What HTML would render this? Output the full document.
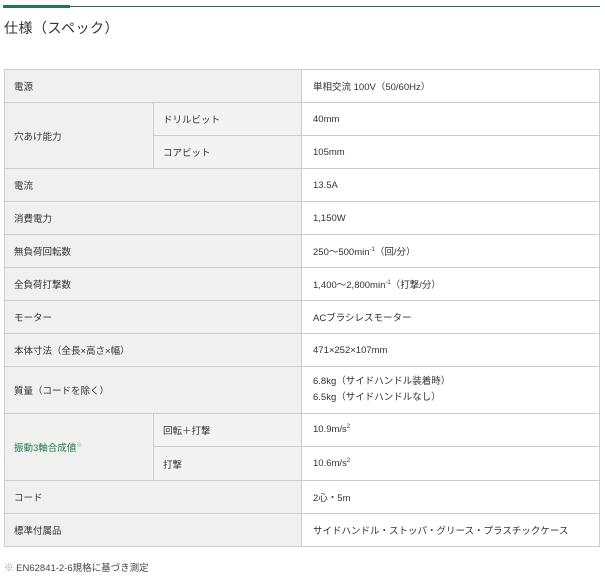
<!DOCTYPE html>
<html><head><meta charset="utf-8"><style>
*{margin:0;padding:0;box-sizing:border-box}
body{width:605px;height:576px;background:#fff;font-family:"Liberation Sans","Noto Sans CJK JP",sans-serif;color:#333;position:relative;overflow:hidden}
.l1{position:absolute;left:3px;top:6px;width:597px;height:1px;background:#2e6b4f}
.l2{position:absolute;left:3px;top:5px;width:67px;height:3px;background:#1e7a4a}
h1{position:absolute;left:4px;top:18px;font-size:14px;font-weight:normal;color:#333;letter-spacing:0.5px}
table{position:absolute;left:4px;top:69px;width:596px;border-collapse:collapse;font-size:9.5px}
td{border:1px solid #ccc;padding:0 0 0 9px;vertical-align:middle;height:33px}
td.k{background:#f0f0f0;width:149px}
td.s{background:#f3f3f3;width:148px}
td.v{background:#fff;padding-left:11px}
sup{font-size:6px}
.g{color:#1e7a4a}
.fn{position:absolute;left:4px;top:560px;font-size:9.5px;color:#444}
</style></head><body>
<div class="l1"></div><div class="l2"></div>
<h1>仕様（スペック）</h1>
<table>
<tr><td class="k" colspan="2">電源</td><td class="v">単相交流 100V（50/60Hz）</td></tr>
<tr><td class="k" rowspan="2">穴あけ能力</td><td class="s">ドリルビット</td><td class="v">40mm</td></tr>
<tr><td class="s">コアビット</td><td class="v">105mm</td></tr>
<tr><td class="k" colspan="2">電流</td><td class="v">13.5A</td></tr>
<tr><td class="k" colspan="2">消費電力</td><td class="v">1,150W</td></tr>
<tr><td class="k" colspan="2">無負荷回転数</td><td class="v">250～500min<sup>-1</sup>（回/分）</td></tr>
<tr><td class="k" colspan="2">全負荷打撃数</td><td class="v">1,400～2,800min<sup>-1</sup>（打撃/分）</td></tr>
<tr><td class="k" colspan="2">モーター</td><td class="v">ACブラシレスモーター</td></tr>
<tr><td class="k" colspan="2">本体寸法（全長×高さ×幅）</td><td class="v">471×252×107mm</td></tr>
<tr><td class="k" colspan="2" style="height:47px">質量（コードを除く）</td><td class="v" style="line-height:16px">6.8kg（サイドハンドル装着時）<br>6.5kg（サイドハンドルなし）</td></tr>
<tr><td class="k g" rowspan="2">振動3軸合成値<sup style="color:#999">※</sup></td><td class="s">回転＋打撃</td><td class="v">10.9m/s<sup>2</sup></td></tr>
<tr><td class="s" style="height:34px">打撃</td><td class="v">10.6m/s<sup>2</sup></td></tr>
<tr><td class="k" colspan="2">コード</td><td class="v">2心・5m</td></tr>
<tr><td class="k" colspan="2">標準付属品</td><td class="v">サイドハンドル・ストッパ・グリース・プラスチックケース</td></tr>
</table>
<div class="fn"><span style="color:#999">※</span> EN62841-2-6規格に基づき測定</div>
</body></html>
